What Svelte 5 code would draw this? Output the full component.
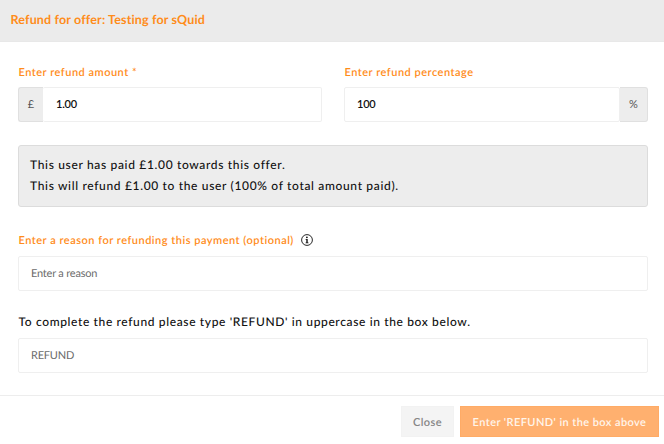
<script>
    let amount = $state("1.00");
    let percentage = $state("100");
    let reason = $state("");
    let confirmation = $state("");

    const offer = "Testing for sQuid";
    const paid = "1.00";
</script>

<div class="modal">
    <header class="modal-header">
        <h4>Refund for offer: {offer}</h4>
    </header>

    <div class="modal-body">
        <div class="row">
            <div class="field">
                <label for="amount">Enter refund amount *</label>
                <div class="input-group">
                    <span class="addon left">£</span>
                    <input id="amount" type="text" bind:value={amount} />
                </div>
            </div>
            <div class="field">
                <label for="percentage">Enter refund percentage</label>
                <div class="input-group">
                    <input id="percentage" type="text" bind:value={percentage} />
                    <span class="addon right">%</span>
                </div>
            </div>
        </div>

        <div class="well">
            <p>This user has paid £{paid} towards this offer.</p>
            <p>This will refund £{amount} to the user ({percentage}% of total amount paid).</p>
        </div>

        <div class="field reason">
            <label for="reason">
                <span>Enter a reason for refunding this payment (optional)</span>
                <svg class="info" viewBox="0 0 12 12" aria-hidden="true">
                    <circle cx="6" cy="6" r="5.4" fill="none" stroke="#111" stroke-width="0.9" />
                    <circle cx="5.9" cy="3.3" r="0.9" fill="#111" />
                    <path d="M4.6 4.9h2.1v3.5h.8v.8H4.6v-.8h.7V5.7h-.7z" fill="#111" />
                </svg>
            </label>
            <input id="reason" type="text" placeholder="Enter a reason" bind:value={reason} />
        </div>

        <div class="field confirm">
            <label for="confirm">To complete the refund please type 'REFUND' in uppercase in the box below.</label>
            <input id="confirm" type="text" placeholder="REFUND" bind:value={confirmation} />
        </div>
    </div>

    <footer class="modal-footer">
        <button class="btn close" type="button">Close</button>
        <button class="btn submit" type="button" disabled={confirmation !== "REFUND"}>Enter 'REFUND' in the box above</button>
    </footer>
</div>

<style>
    :global(body) {
        margin: 0;
        background: #fff;
    }

    .modal {
        box-sizing: border-box;
        width: 664px;
        height: 444px;
        overflow: hidden;
        display: flex;
        flex-direction: column;
        font-family: Lato, sans-serif;
        font-size: 11px;
        text-rendering: geometricPrecision;
        color: #111;
        background: #fff;
    }

    .modal-header {
        box-sizing: border-box;
        height: 42px;
        padding: 11px 10.5px 0;
        background: #ebebeb;
        border-bottom: 1px solid #e8e8e8;
    }

    h4 {
        margin: 0;
        font-size: 12.5px;
        line-height: 17px;
        font-weight: 700;
        letter-spacing: 0.15px;
        color: #ff8c1a;
    }

    .modal-body {
        box-sizing: border-box;
        height: 353px;
        padding: 22px 16px 0 18px;
    }

    .row {
        display: grid;
        grid-template-columns: 304px 304px;
        gap: 22px;
    }

    label {
        display: flex;
        align-items: center;
        height: 17px;
        margin-bottom: 6px;
        padding-left: 0.5px;
        font-weight: 600;
        letter-spacing: 0.5px;
        color: #ff8c1a;
        white-space: nowrap;
    }

    .input-group {
        display: flex;
    }

    input {
        box-sizing: border-box;
        display: block;
        width: 100%;
        min-width: 0;
        height: 35px;
        padding: 0 12px;
        border: 1px solid #efefef;
        border-radius: 2px;
        background: #fff;
        font-family: inherit;
        font-size: 11px;
        font-weight: 600;
        letter-spacing: -0.2px;
        text-rendering: inherit;
        color: #111;
        outline: none;
    }

    input::placeholder {
        color: #6c6c6c;
        font-weight: 400;
        opacity: 1;
    }

    .addon {
        box-sizing: border-box;
        flex: none;
        display: flex;
        align-items: center;
        justify-content: center;
        height: 35px;
        border: 1px solid #e0e0e0;
        background: #ededed;
        color: #555;
    }

    .addon.left {
        width: 25px;
        border-right: 0;
        border-radius: 3px 0 0 3px;
    }

    .addon.right {
        width: 28px;
        border-left: 0;
        border-radius: 0 3px 3px 0;
    }

    .addon.left + input {
        padding-left: 13px;
        border-left: 0;
    }

    .well {
        box-sizing: border-box;
        width: 630px;
        height: 62px;
        margin-top: 23px;
        padding: 8px 11px;
        border: 1px solid #dcdcdc;
        border-radius: 3px;
        background: #ededed;
    }

    .well p {
        margin: 0;
        font-size: 12px;
        line-height: 21px;
        font-weight: 500;
        letter-spacing: 0.66px;
        white-space: nowrap;
    }

    .reason {
        margin-top: 25px;
    }

    .reason label {
        height: 16px;
        margin-bottom: 8px;
    }

    .info {
        width: 12px;
        height: 12px;
        margin-left: 7px;
    }

    .confirm {
        margin-top: 23px;
    }

    .confirm label {
        height: 15px;
        margin-bottom: 9px;
        font-size: 12px;
        font-weight: 500;
        letter-spacing: 0.63px;
        color: #111;
    }

    .modal-footer {
        flex: 1;
        display: flex;
        justify-content: flex-end;
        align-items: flex-start;
        gap: 6px;
        padding: 10px 5px 0;
        border-top: 1px solid #ededed;
    }

    .btn {
        height: 31px;
        padding: 1px 0 0;
        border: 1px solid #f2f2f2;
        font-family: inherit;
        font-size: 11px;
        font-weight: 600;
        letter-spacing: 0.42px;
        text-rendering: inherit;
        white-space: nowrap;
    }

    .close {
        width: 53px;
        background: #f4f4f4;
        color: #858585;
    }

    .submit {
        width: 199px;
        border-color: #ffab66;
        background: #ffb06f;
        color: #fff5eb;
    }
</style>
